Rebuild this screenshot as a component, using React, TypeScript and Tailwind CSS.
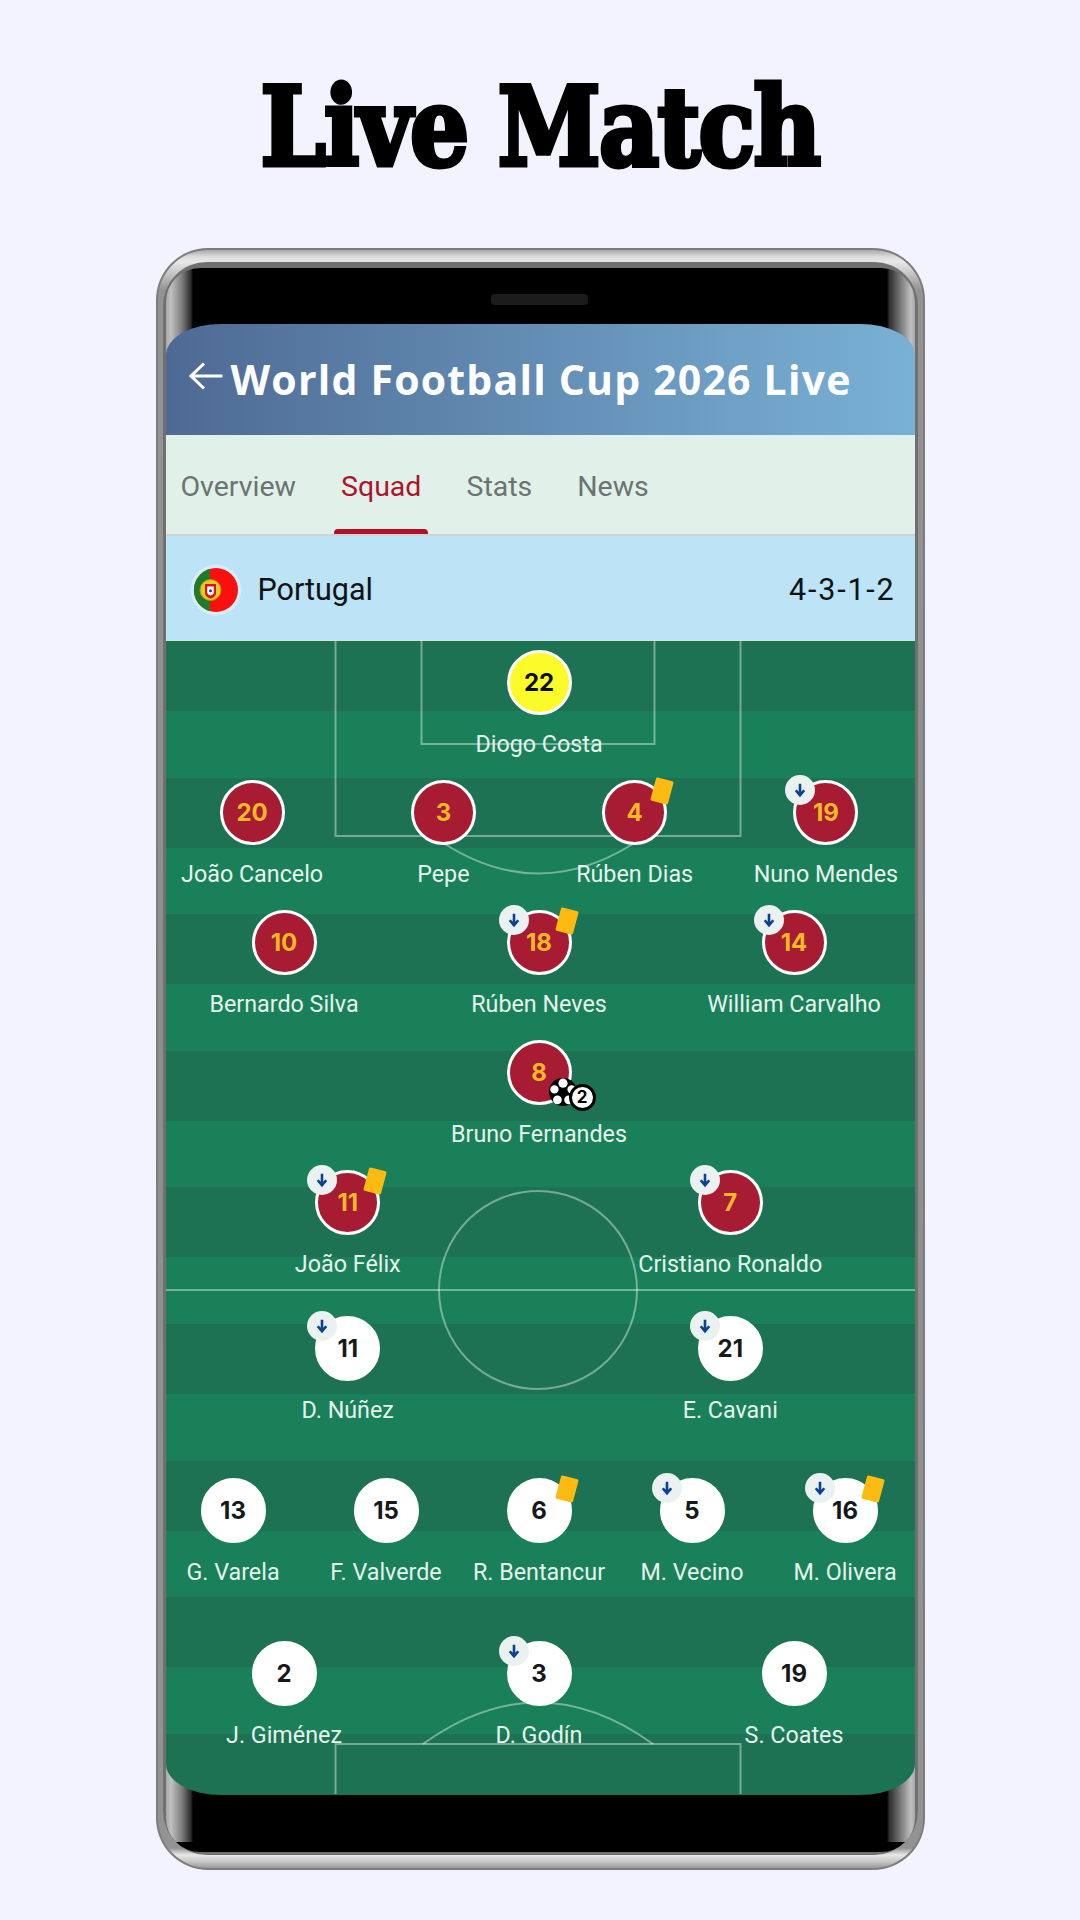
import React from "react";

type P = { n: string; name: string; sub?: boolean; card?: boolean; goal?: boolean };
type Kind = "gk" | "pt" | "ur";

const Ball = () => (
  <svg viewBox="0 0 28 28" className="w-[28px] h-[28px]">
    <circle cx="14" cy="14" r="14" fill="#000" />
    <circle cx="14" cy="5.2" r="4.6" fill="#fff" />
    <circle cx="5.4" cy="11.4" r="4.2" fill="#fff" />
    <circle cx="22.6" cy="11.4" r="4.2" fill="#fff" />
    <circle cx="8.4" cy="21.8" r="4.4" fill="#fff" />
    <circle cx="19.6" cy="21.8" r="4.4" fill="#fff" />
  </svg>
);

const Player = ({ p, kind }: { p: P; kind: Kind }) => {
  const circle =
    kind === "gk"
      ? "bg-[#fbfb2a] text-[#0b0b0b] border-white"
      : kind === "pt"
      ? "bg-[#a81c33] text-[#f6b926] border-white"
      : "bg-white text-[#16181a] border-white";
  return (
    <div className="flex-1 flex flex-col items-center">
      <div className={`relative shrink-0 w-[65px] h-[65px] rounded-full border-[3px] flex items-center justify-center font-['Inter',sans-serif] font-bold text-[24px] ${circle}`}>
        {p.n}
        {p.sub && (
          <span className="absolute left-[-11px] top-[-8px] w-[30px] h-[30px] rounded-full bg-[#e9f2f0] flex items-center justify-center">
            <svg viewBox="0 0 16 16" className="w-[18px] h-[18px]">
              <path d="M8 2.5v8.5M4.2 8.2L8 12.6l3.8-4.4" fill="none" stroke="#0e3f92" strokeWidth="2.3" />
            </svg>
          </span>
        )}
        {p.card && (
          <span className="absolute left-[48px] top-[-4px] w-[18px] h-[24px] rounded-[1.5px] bg-[#fdbb12] rotate-[15deg]" />
        )}
        {p.goal && (
          <>
            <span className="absolute left-[39px] top-[35px] w-[28px] h-[28px] rounded-full">
              <Ball />
            </span>
            <span className="absolute left-[59px] top-[41px] w-[27px] h-[27px] rounded-full bg-white border-[3px] border-black flex items-center justify-center text-black text-[17px] leading-none font-bold">
              2
            </span>
          </>
        )}
      </div>
      <div className="mt-[14px] h-[30px] shrink-0 leading-[30px] text-[23.3px] whitespace-nowrap text-[#e6f3ee] font-['Roboto',sans-serif]">
        {p.name}
      </div>
    </div>
  );
};

const Row = ({ players, kind, h }: { players: P[]; kind: Kind; h: string }) => (
  <div className={`flex ${h}`}>
    {players.map((p) => (
      <Player key={p.name} p={p} kind={kind} />
    ))}
  </div>
);

const PitchLines = () => (
  <svg className="absolute left-0 top-0 w-[750px] h-[1153px]" viewBox="0 0 750 1153" fill="none" stroke="#ffffff" strokeOpacity="0.4" strokeWidth="2">
    <rect x="169.5" y="-4" width="405" height="199" />
    <rect x="255.5" y="-4" width="233" height="107" />
    <path d="M267 195Q372 270 479 195" />
    <path d="M0 649H750" />
    <circle cx="372" cy="649" r="99" />
    <rect x="169.5" y="1103" width="405" height="80" />
    <path d="M257 1103Q372 1020 487 1103" />
  </svg>
);

const Flag = () => (
  <svg viewBox="0 0 52 52" className="w-[52px] h-[52px]">
    <circle cx="26" cy="26" r="25.5" fill="#eef7f5" fillOpacity="0.5" />
    <circle cx="26" cy="26" r="22" fill="#fb0f0f" />
    <path d="M20 4.8A22 22 0 0 0 20 47.2z" fill="#1f7a2c" />
    <circle cx="20.5" cy="26" r="10.5" fill="#e9cb1f" stroke="#a8921a" strokeWidth="1" />
    <path d="M15 20h11v9c0 3-2.5 4.6-5.5 5.5-3-.9-5.5-2.5-5.5-5.5z" fill="#d4171e" />
    <path d="M17.2 22.5h6.6v6c0 1.6-1.6 2.5-3.3 3.1-1.7-.6-3.3-1.5-3.3-3.1z" fill="#fff" />
    <circle cx="20.5" cy="26.8" r="1.5" fill="#1c3f95" />
  </svg>
);

export default function App() {
  return (
    <div className="w-[1080px] h-[1920px] bg-[#f2f3ff] flex flex-col items-center overflow-hidden">
      <h1 className="h-[248px] pt-[62px] text-[108px] leading-[130px] font-bold text-black tracking-[-2px] scale-x-[0.86] font-['DejaVu_Serif',serif] [-webkit-text-stroke:5px_black] whitespace-nowrap">
        Live Match
      </h1>
      <div className="w-[769px] h-[1622px] shrink-0 rounded-[52px] p-[2px] bg-[#7d7d7d]">
        <div className="h-full rounded-[50px] pt-[12px] px-[5px] pb-[13px] bg-[linear-gradient(180deg,#a8a8a8_0,#dedede_7px,#e8e8e8_12px,#939393_40px,#8e8e8e_50%,#939393_calc(100%-20px),#e8e8e8_calc(100%-13px),#c4c4c4_calc(100%-6px),#9a9a9a_100%)]">
          <div className="h-full rounded-[44px] pt-[6px] px-[3px] pb-[3px] bg-[#707070]">
            <div className="h-full rounded-[34px] flex flex-col pt-[26px] pb-[57px] overflow-hidden bg-[linear-gradient(0deg,#000_10px,transparent_10px),linear-gradient(90deg,#a8a8a8_0,#c0c0c0_5px,#7c7c7c_16px,#2c2c2c_25px,#000_27px,#000_calc(100%-28px),#2c2c2c_calc(100%-26px),#7c7c7c_calc(100%-14px),#c0c0c0_calc(100%-4px),#a8a8a8_100%)]">
              <div className="self-center shrink-0 ml-[-2px] w-[97px] h-[11px] mb-[19px] rounded-[4px] bg-[#1c1c1c]" />
              <div className="flex-1 min-h-0 flex flex-col rounded-[55px/31px] overflow-hidden">
                <header className="h-[111px] shrink-0 flex items-center pl-[23px] gap-[8px] bg-[linear-gradient(90deg,#4e6a94,#79b1d5)]">
                  <svg viewBox="0 0 34 28" className="w-[34px] h-[28px] mb-[8px]" fill="none" stroke="#fff" strokeWidth="3">
                    <path d="M33.5 14H2M15 1.5L2 14l13 12.5" />
                  </svg>
                  <span className="text-[41px] font-bold tracking-[1.2px] text-white whitespace-nowrap font-['Open_Sans',sans-serif]">
                    World Football Cup 2026 Live
                  </span>
                </header>
                <nav className="h-[101px] shrink-0 flex gap-[31px] pl-[8px] pt-[6px] bg-[#dff1e9] border-b-2 border-[#cfd3d2] font-['Roboto',sans-serif] text-[28.5px] text-[#6c7371]">
                  <span className="px-[7px] flex items-center">Overview</span>
                  <span className="relative px-[7px] flex items-center text-[#b0122e]">
                    Squad
                    <span className="absolute left-0 right-0 bottom-0 h-[5px] rounded-t-[4px] bg-[#b50f2a]" />
                  </span>
                  <span className="px-[7px] flex items-center">Stats</span>
                  <span className="px-[7px] flex items-center">News</span>
                </nav>
                <div className="h-[104px] shrink-0 flex items-center pl-[24px] pr-[19px] pt-[4px] bg-[#bde3f6] font-['Roboto',sans-serif] text-[#101214] text-[30.5px]">
                  <Flag />
                  <span className="ml-[16px] flex-1">Portugal</span>
                  <span className="tracking-[1.8px]">4-3-1-2</span>
                </div>
                <div className="relative flex-1 min-h-0 overflow-hidden pt-[9px] border-t border-[#c9ead9] bg-[repeating-linear-gradient(180deg,#1c7252_0,#1c7252_70px,#198059_70px,#198059_136.6px)]">
                  <PitchLines />
                  <div className="relative w-[765px] ml-[-9px]">
                    <Row h="h-[130px]" kind="gk" players={[{ n: "22", name: "Diogo Costa" }]} />
                    <Row h="h-[130px]" kind="pt" players={[
                      { n: "20", name: "João Cancelo" },
                      { n: "3", name: "Pepe" },
                      { n: "4", name: "Rúben Dias", card: true },
                      { n: "19", name: "Nuno Mendes", sub: true },
                    ]} />
                    <Row h="h-[130px]" kind="pt" players={[
                      { n: "10", name: "Bernardo Silva" },
                      { n: "18", name: "Rúben Neves", sub: true, card: true },
                      { n: "14", name: "William Carvalho", sub: true },
                    ]} />
                    <Row h="h-[130px]" kind="pt" players={[{ n: "8", name: "Bruno Fernandes", goal: true }]} />
                    <Row h="h-[146px]" kind="pt" players={[
                      { n: "11", name: "João Félix", sub: true, card: true },
                      { n: "7", name: "Cristiano Ronaldo", sub: true },
                    ]} />
                    <Row h="h-[162px]" kind="ur" players={[
                      { n: "11", name: "D. Núñez", sub: true },
                      { n: "21", name: "E. Cavani", sub: true },
                    ]} />
                    <Row h="h-[163px]" kind="ur" players={[
                      { n: "13", name: "G. Varela" },
                      { n: "15", name: "F. Valverde" },
                      { n: "6", name: "R. Bentancur", card: true },
                      { n: "5", name: "M. Vecino", sub: true },
                      { n: "16", name: "M. Olivera", sub: true, card: true },
                    ]} />
                    <Row h="h-[130px]" kind="ur" players={[
                      { n: "2", name: "J. Giménez" },
                      { n: "3", name: "D. Godín", sub: true },
                      { n: "19", name: "S. Coates" },
                    ]} />
                  </div>
                </div>
              </div>
            </div>
          </div>
        </div>
      </div>
    </div>
  );
}
